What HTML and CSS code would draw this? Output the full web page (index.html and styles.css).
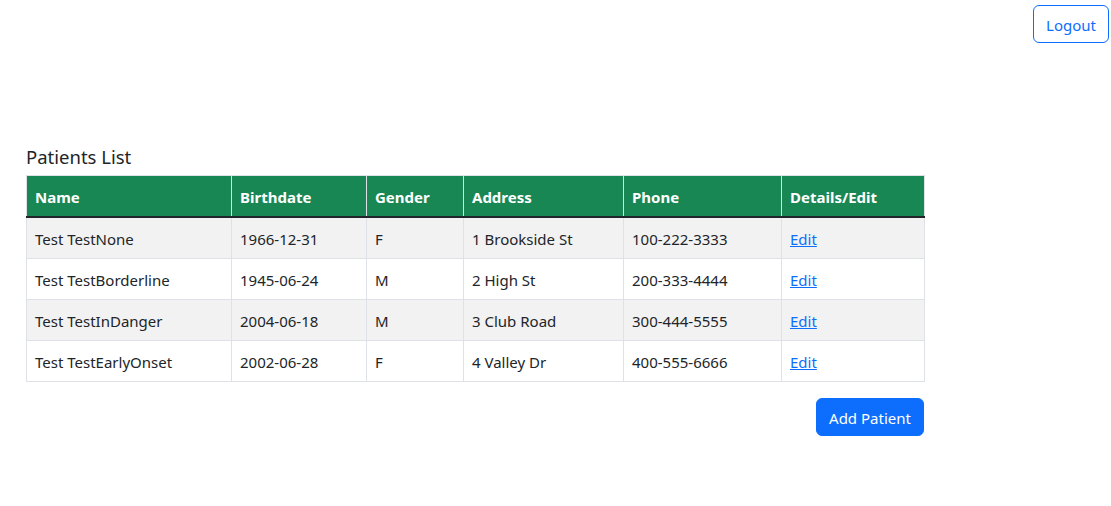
FILE: index.html
```html
<!DOCTYPE html>
<html lang="en">
<head>
<meta charset="utf-8">
<title>Patients List</title>
<link rel="stylesheet" href="styles.css">
</head>
<body>
<header class="topbar">
  <button class="btn btn-outline">Logout</button>
</header>
<main class="content">
  <h5 class="title">Patients List</h5>
  <table class="table">
    <thead>
      <tr>
        <th class="c1">Name</th>
        <th class="c2">Birthdate</th>
        <th class="c3">Gender</th>
        <th class="c4">Address</th>
        <th class="c5">Phone</th>
        <th class="c6">Details/Edit</th>
      </tr>
    </thead>
    <tbody>
      <tr class="odd">
        <td>Test TestNone</td><td>1966-12-31</td><td>F</td><td>1 Brookside St</td><td>100-222-3333</td><td><a href="#">Edit</a></td>
      </tr>
      <tr>
        <td>Test TestBorderline</td><td>1945-06-24</td><td>M</td><td>2 High St</td><td>200-333-4444</td><td><a href="#">Edit</a></td>
      </tr>
      <tr class="odd">
        <td>Test TestInDanger</td><td>2004-06-18</td><td>M</td><td>3 Club Road</td><td>300-444-5555</td><td><a href="#">Edit</a></td>
      </tr>
      <tr>
        <td>Test TestEarlyOnset</td><td>2002-06-28</td><td>F</td><td>4 Valley Dr</td><td>400-555-6666</td><td><a href="#">Edit</a></td>
      </tr>
    </tbody>
  </table>
  <div class="actions">
    <button class="btn btn-primary">Add Patient</button>
  </div>
</main>
</body>
</html>
```
FILE: styles.css
```css
* { box-sizing: border-box; }
html, body { margin: 0; padding: 0; background: #fff; }
body {
  font-family: "Noto Sans", "Open Sans", "DejaVu Sans", sans-serif;
  font-size: 15px;
  line-height: 24px;
  color: #212529;
}
.topbar {
  display: flex;
  justify-content: flex-end;
  padding: 5px 2px 0 0;
}
.btn {
  font-family: inherit;
  font-size: 15px;
  line-height: 24px;
  border-radius: 6px;
  border: 1px solid transparent;
  cursor: pointer;
  background: transparent;
  height: 38px;
  padding: 7px 0 5px;
}
.btn-outline {
  color: #0d6efd;
  border-color: #0d6efd;
  width: 76px;
}
.btn-primary {
  background: #0d6efd;
  border-color: #0d6efd;
  color: #fff;
  width: 108px;
}
.content {
  width: 924px;
  padding-left: 26px;
  margin-top: 100px;
}
.title {
  font-size: 18.5px;
  font-weight: 400;
  line-height: 24px;
  margin: 0 0 6px 0;
  padding-top: 2px;
}
.table {
  width: 898px;
  border-collapse: collapse;
  table-layout: fixed;
}
.table th, .table td {
  text-align: left;
  padding: 9px 8px 7px;
  border: 1px solid #dee2e6;
  height: 41px;
  white-space: nowrap;
}
.table thead th {
  background: #198754;
  color: #fff;
  font-weight: 700;
  height: 40px;
}
.table tbody tr:first-child td { border-top: 2px solid #212529; }
.table tbody tr.odd td { background: #f2f2f2; }
.c1 { width: 205px; }
.c2 { width: 135px; }
.c3 { width: 97px; }
.c4 { width: 160px; }
.c5 { width: 158px; }
.c6 { width: 143px; }
.table a { color: #0d6efd; text-decoration: underline; }
.actions {
  display: flex;
  justify-content: flex-end;
  margin-top: 16px;
}
```
